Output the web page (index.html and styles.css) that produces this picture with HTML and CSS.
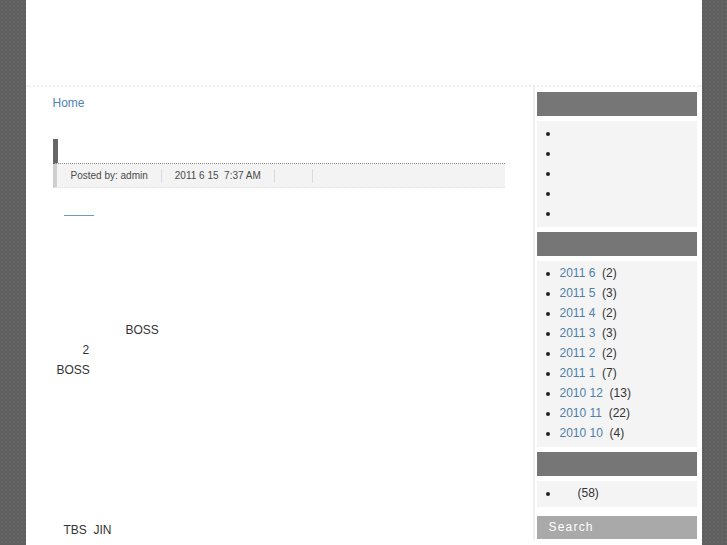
FILE: index.html
```html
<!DOCTYPE html>
<html>
<head>
<meta charset="utf-8">
<link rel="stylesheet" href="styles.css">
</head>
<body>
<div class="page">
  <div class="header"></div>
  <div class="wrap">
    <div class="main">
      <div class="breadcrumb"><a href="#">Home</a></div>
      <div class="post-title"></div>
      <div class="meta">
        <span class="meta-item first">Posted by: admin</span>
        <span class="meta-item">2011 6 15&nbsp; 7:37 AM</span>
        <span class="meta-item"><span class="blank"></span></span>
      </div>
      <div class="post-body">
        <p class="line indent-a"><a class="empty-link" href="#"></a></p>
        <p class="line">&nbsp;</p>
        <p class="line">&nbsp;</p>
        <p class="line">&nbsp;</p>
        <p class="line">&nbsp;</p>
        <p class="line">&nbsp;</p>
        <p class="line indent-b">BOSS</p>
        <p class="line indent-c">2</p>
        <p class="line indent-d">BOSS</p>
        <p class="line">&nbsp;</p>
        <p class="line">&nbsp;</p>
        <p class="line">&nbsp;</p>
        <p class="line">&nbsp;</p>
        <p class="line">&nbsp;</p>
        <p class="line">&nbsp;</p>
        <p class="line">&nbsp;</p>
        <p class="line indent-a">TBS&nbsp; JIN</p>
      </div>
    </div>
    <div class="sidebar">
      <div class="widget">
        <div class="widget-title"></div>
        <div class="widget-body">
          <ul>
            <li>&nbsp;</li>
            <li>&nbsp;</li>
            <li>&nbsp;</li>
            <li>&nbsp;</li>
            <li>&nbsp;</li>
          </ul>
        </div>
      </div>
      <div class="widget">
        <div class="widget-title"></div>
        <div class="widget-body">
          <ul>
            <li><a href="#">2011 6</a>&nbsp; (2)</li>
            <li><a href="#">2011 5</a>&nbsp; (3)</li>
            <li><a href="#">2011 4</a>&nbsp; (2)</li>
            <li><a href="#">2011 3</a>&nbsp; (3)</li>
            <li><a href="#">2011 2</a>&nbsp; (2)</li>
            <li><a href="#">2011 1</a>&nbsp; (7)</li>
            <li><a href="#">2010 12</a>&nbsp; (13)</li>
            <li><a href="#">2010 11</a>&nbsp; (22)</li>
            <li><a href="#">2010 10</a>&nbsp; (4)</li>
          </ul>
        </div>
      </div>
      <div class="widget">
        <div class="widget-title"></div>
        <div class="widget-body">
          <ul>
            <li><a class="cat-link" href="#"></a>(58)</li>
          </ul>
        </div>
      </div>
      <div class="search">Search</div>
    </div>
  </div>
</div>
</body>
</html>
```

FILE: styles.css
```css
html, body {
  margin: 0;
  padding: 0;
}
body {
  background-color: #5f5f5f;
  background-image: radial-gradient(circle, rgba(255,255,255,0.035) 1px, transparent 1px);
  background-size: 4px 4px;
  font-family: "Liberation Sans", Arial, sans-serif;
  font-size: 12px;
  color: #333;
  overflow: hidden;
}
a {
  color: #4d80a9;
  text-decoration: none;
}
.page {
  width: 676px;
  margin: 0 auto;
  background: #fff;
  min-height: 545px;
}
.header {
  height: 85px;
  border-bottom: 2px dotted #efefef;
}
.wrap {
  display: flex;
}
.main {
  width: 452px;
  padding: 8px 28px 0 27px;
}
.breadcrumb {
  line-height: 16px;
  height: 16px;
  margin-bottom: 28px;
}
.breadcrumb a {
  color: #4f84ad;
}
.post-title {
  height: 24px;
  border-left: 5px solid #666;
  border-bottom: 1px dotted #8a8a8a;
}
.meta {
  display: flex;
  align-items: center;
  height: 23px;
  background: #f3f3f3;
  border-left: 4px solid #cfcfcf;
  border-bottom: 1px dotted #e2e2e2;
  padding-left: 14px;
  font-size: 10px;
  color: #4a4a4a;
}
.meta-item {
  padding: 0 13px;
  border-right: 1px solid #dcdcdc;
  line-height: 14px;
}
.meta-item.first {
  padding-left: 0;
}
.blank {
  display: inline-block;
  width: 11px;
}
.post-body {
  margin-top: 12px;
  line-height: 20px;
}
.line {
  margin: 0;
  height: 20px;
}
.indent-a {
  padding-left: 11px;
}
.indent-b {
  padding-left: 73px;
}
.indent-c {
  padding-left: 30px;
}
.indent-d {
  padding-left: 4px;
}
.empty-link {
  display: inline-block;
  width: 30px;
  height: 15px;
  vertical-align: top;
  border-bottom: 1px solid #6d9cc2;
}
.sidebar {
  width: 160px;
  border-left: 2px solid #efefef;
  padding: 5px 4px 0 2px;
}
.widget-title {
  height: 24px;
  background: #767676;
  margin-bottom: 5px;
}
.widget-body {
  background: #f4f4f4;
  padding: 2px 0 4px;
  margin-bottom: 5px;
}
.widget-body ul {
  margin: 0;
  padding-left: 23px;
  list-style: disc;
  color: #333;
}
.widget-body li {
  line-height: 20px;
  height: 20px;
}
.widget-body li::marker {
  color: #222;
}
.cat-link {
  display: inline-block;
  width: 18px;
}
.search {
  margin-top: 9px;
  height: 23px;
  line-height: 23px;
  background: #a9a9a9;
  color: #fff;
  padding-left: 12px;
  letter-spacing: 1.2px;
  font-size: 12px;
}
```
